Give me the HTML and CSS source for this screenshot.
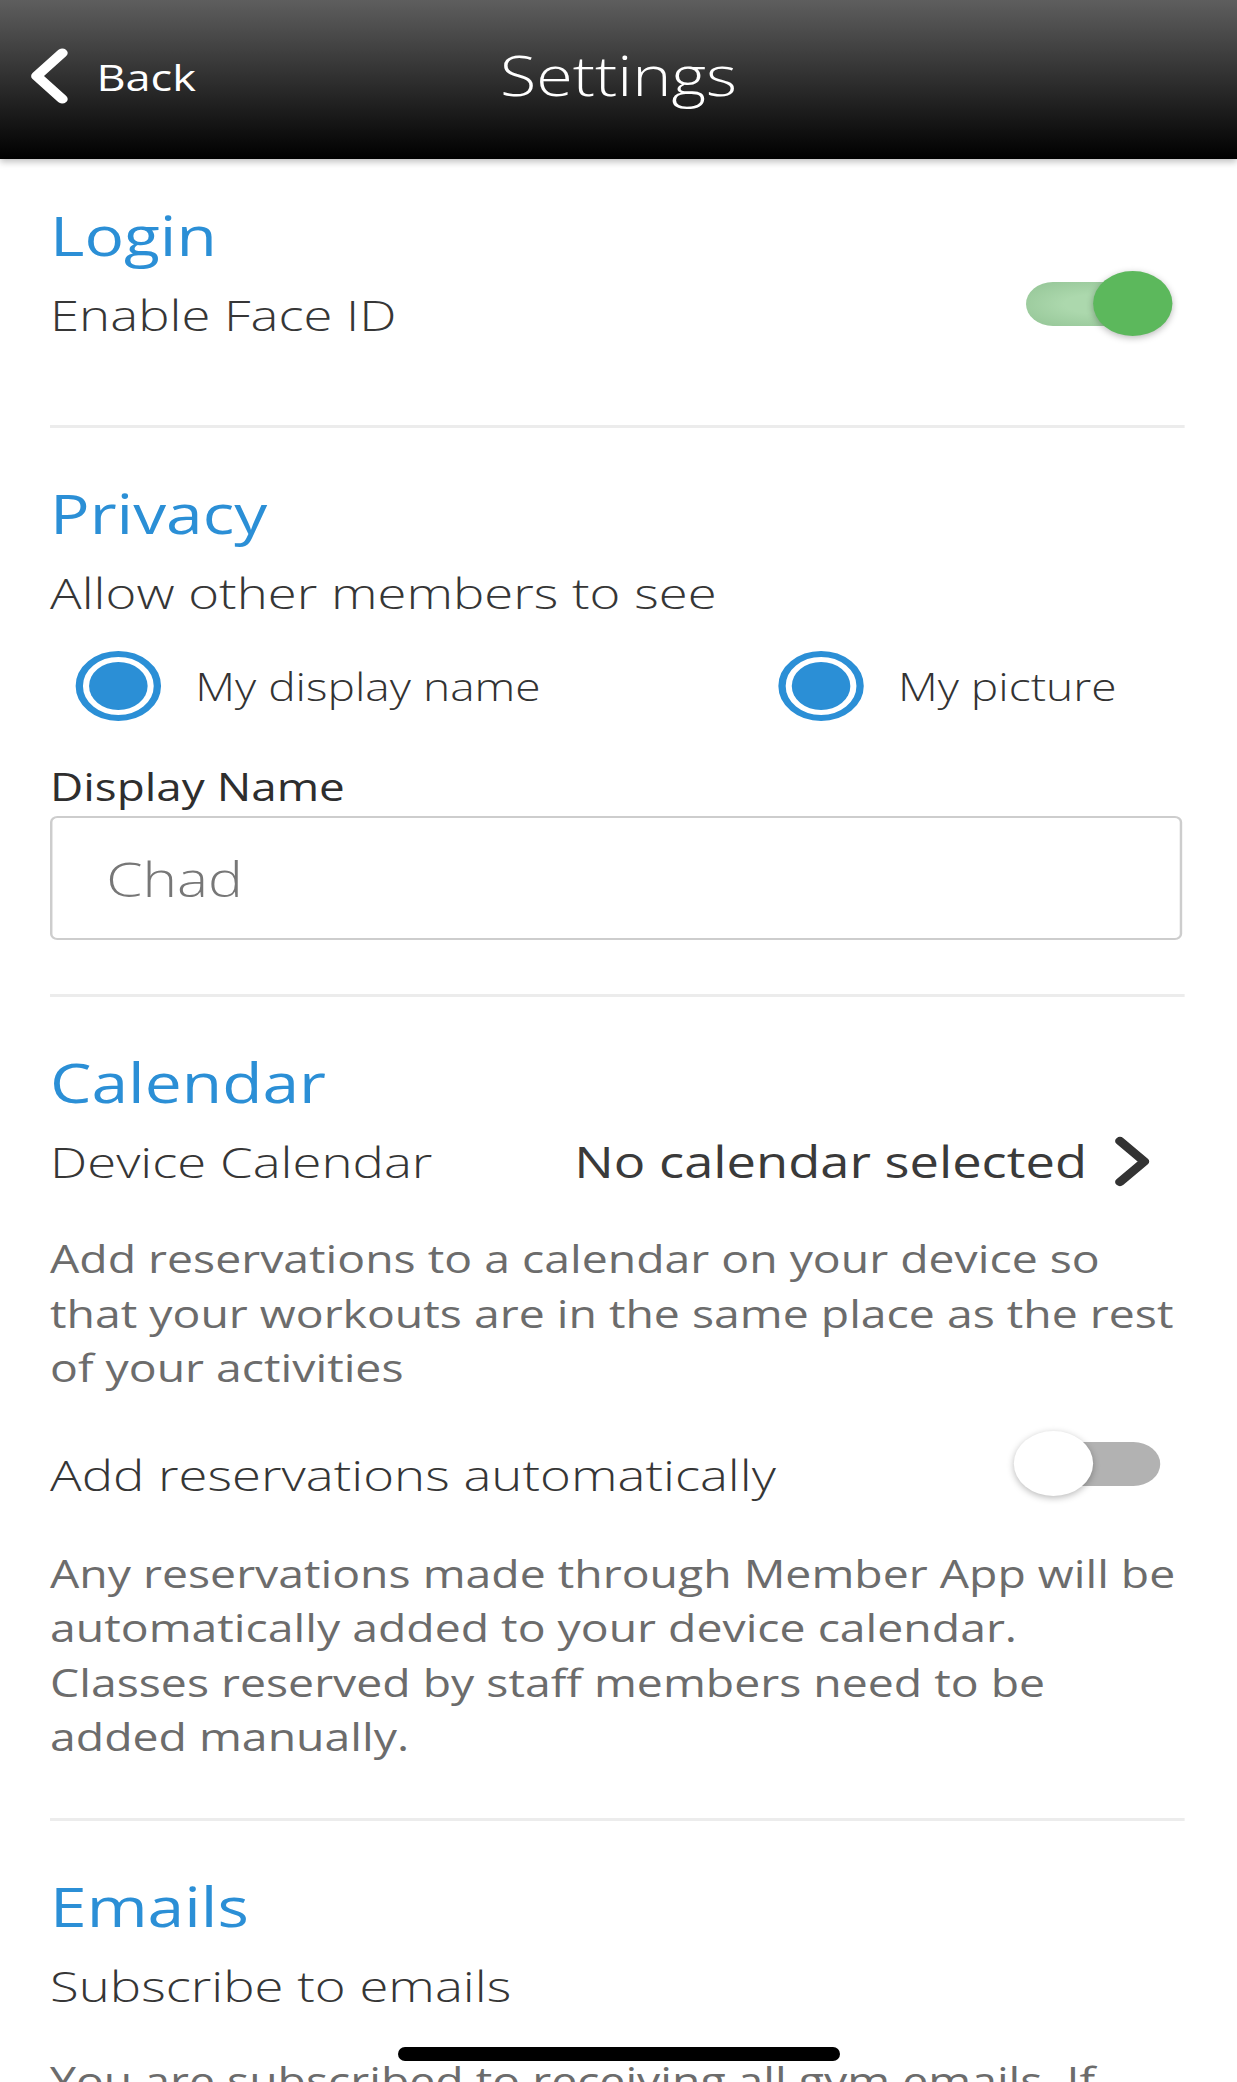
FILE: index.html
```html
<!DOCTYPE html>
<html lang="en">
<head>
    <meta charset="utf-8">
    <title>Settings</title>
    <link rel="stylesheet" href="styles.css">
</head>
<body>
    <div class="screen">
        <header class="topbar">
            <div class="back">
                <svg class="back-icon" viewBox="0 0 34 56" width="34" height="56">
                    <path d="M28 5 L7 28 L28 51" fill="none" stroke="#fff" stroke-width="9" stroke-linecap="round" stroke-linejoin="round"/>
                </svg>
                <span>Back</span>
            </div>
            <h1 class="title">Settings</h1>
            <div></div>
        </header>

        <main class="content">
            <section class="group">
                <h2 class="group-title">Login</h2>
                <div class="row">
                    <span class="label">Enable Face ID</span>
                    <span class="switch on"><span class="knob"></span></span>
                </div>
            </section>

            <section class="group">
                <h2 class="group-title">Privacy</h2>
                <div class="row">
                    <span class="label">Allow other members to see</span>
                </div>
                <div class="choices">
                    <label class="choice"><span class="radio"></span>My display name</label>
                    <label class="choice"><span class="radio"></span>My picture</label>
                </div>
                <div class="field-label">Display Name</div>
                <input class="field" type="text" value="Chad">
            </section>

            <section class="group">
                <h2 class="group-title">Calendar</h2>
                <div class="row">
                    <span class="label">Device Calendar</span>
                    <span class="picker">
                        No calendar selected
                        <svg class="picker-icon" viewBox="0 0 33 53" width="33" height="53">
                            <path d="M7 6 L27 26.5 L7 47" fill="none" stroke="#333" stroke-width="8" stroke-linecap="round" stroke-linejoin="round"/>
                        </svg>
                    </span>
                </div>
                <p class="note">Add reservations to a calendar on your device so that your workouts are in the same place as the rest of your activities</p>
                <div class="row row-gap">
                    <span class="label">Add reservations automatically</span>
                    <span class="switch"><span class="knob"></span></span>
                </div>
                <p class="note note-gap">Any reservations made through Member App will be automatically added to your device calendar. Classes reserved by staff members need to be added manually.</p>
            </section>

            <section class="group last">
                <h2 class="group-title">Emails</h2>
                <div class="row">
                    <span class="label">Subscribe to emails</span>
                </div>
                <p class="note note-top">You are subscribed to receiving all gym emails. If you no longer want to receive them, turn this setting off.</p>
            </section>
        </main>
    </div>
    <div class="home-bar"></div>
</body>
</html>
```

FILE: styles.css
```css
html, body {
    margin: 0;
    padding: 0;
    background-color: #fff;
    overflow: hidden;
}

body {
    font-family: "Open Sans", "Noto Sans", sans-serif;
}

/* the whole screen is drawn a bit wider than tall, like the capture */
.screen {
    width: 1014px;
    height: 2082px;
    overflow: hidden;
    transform: scaleX(1.22);
    transform-origin: left top;
}

.topbar {
    display: grid;
    grid-template-columns: 1fr auto 1fr;
    align-items: center;
    height: 159px;
    padding: 0 23px;
    background: linear-gradient(to bottom, #5e5e5e, #000);
    box-shadow: 0 3px 6px rgba(0, 0, 0, 0.25);
    color: #fff;
}

.back {
    display: flex;
    align-items: center;
    gap: 22px;
    font-size: 37px;
    margin-top: -7px;
}

.back-icon {
    display: block;
}

.title {
    margin: -10px 0 0;
    font-size: 54.5px;
    font-weight: 300;
    line-height: 64px;
}

.content {
    padding: 0 43px 0 41px;
}

.group {
    padding: 53px 0 54px;
    border-bottom: 3px solid #ececec;
}

.group:first-child {
    padding-top: 44px;
    padding-bottom: 84px;
}

.group.last {
    border-bottom: none;
}

.group-title {
    margin: 0 0 20px;
    font-size: 54px;
    line-height: 64px;
    font-weight: 400;
    color: #2b8fd6;
}

.row {
    display: flex;
    align-items: center;
    justify-content: space-between;
    height: 54px;
}

.label {
    font-size: 43.2px;
    font-weight: 300;
    color: #363636;
}

.switch {
    position: relative;
    width: 110px;
    height: 44px;
    margin: -21px 20px 0 0;
    border-radius: 22px;
    background: #b2b2b2;
}

.switch.on {
    background: radial-gradient(ellipse at center, #acd8ad 30%, #93c495 100%);
}

.knob {
    position: absolute;
    top: -11px;
    left: -10px;
    width: 65px;
    height: 65px;
    border-radius: 50%;
    background-color: #fff;
    box-shadow: 0 2px 7px rgba(0, 0, 0, 0.28);
}

.switch.on .knob {
    left: auto;
    right: -10px;
    background-color: #5cb85c;
}

.choices {
    display: grid;
    grid-template-columns: 576px auto;
    margin-top: 32px;
    padding-left: 21px;
}

.choice {
    display: flex;
    align-items: center;
    gap: 28px;
    height: 70px;
    font-size: 37.8px;
    font-weight: 300;
    color: #333;
}

.radio {
    box-sizing: border-box;
    width: 70px;
    height: 70px;
    border: 6px solid #2b8fd6;
    border-radius: 50%;
    padding: 5px;
    background-color: #2b8fd6;
    background-clip: content-box;
}

.field-label {
    margin-top: 44px;
    font-size: 37.6px;
    line-height: 44px;
    color: #2e2e2e;
}

.field {
    box-sizing: border-box;
    display: block;
    width: 928px;
    height: 124px;
    margin-top: 7px;
    padding: 0 44px;
    border: 2px solid #cdcdcd;
    border-radius: 6px;
    outline: none;
    font-family: "Open Sans", "Noto Sans", sans-serif;
    font-size: 48px;
    font-weight: 300;
    color: #777;
}

.picker {
    display: flex;
    align-items: center;
    gap: 20px;
    padding-right: 27px;
    font-size: 43px;
    color: #3a3a3a;
}

.picker-icon {
    display: block;
}

.note {
    margin: 43px 0 0;
    font-size: 38px;
    line-height: 54.5px;
    color: #6c6c6c;
}

.row-gap {
    margin-top: 53px;
}

.note-gap {
    margin-top: 44px;
}

.note-top {
    margin-top: 40px;
}

.group.last .row {
    margin-top: 21px;
}

.group.last .group-title {
    margin-bottom: 0;
}

.home-bar {
    position: fixed;
    left: 50%;
    bottom: 21px;
    width: 442px;
    height: 14px;
    margin-left: -221px;
    border-radius: 7px;
    background-color: #000;
}
```
